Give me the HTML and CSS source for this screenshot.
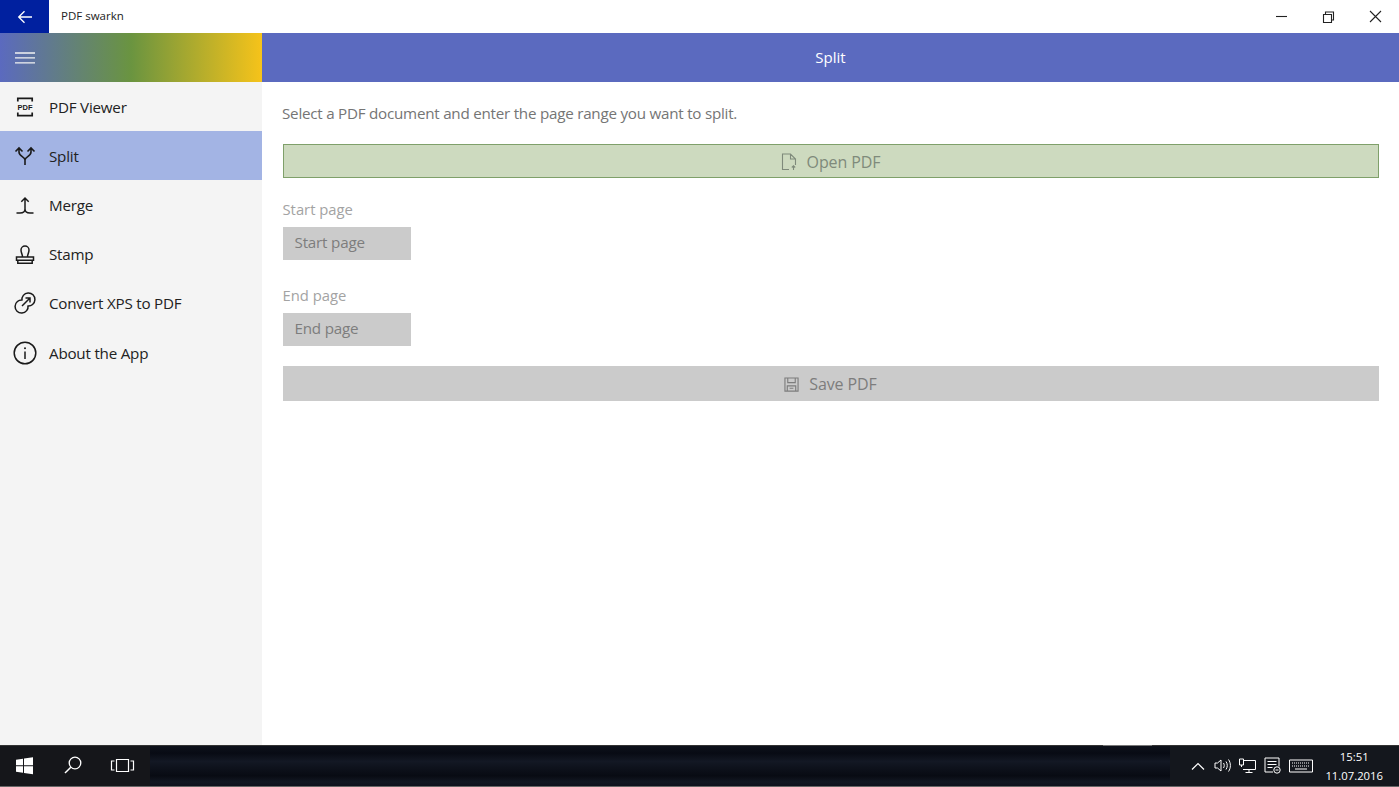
FILE: index.html
```html
<!DOCTYPE html>
<html lang="en">
<head>
<meta charset="utf-8">
<title>PDF swarkn</title>
<link rel="stylesheet" href="styles.css">
</head>
<body>
<div class="window">
  <div class="titlebar">
    <div class="back"><svg width="16" height="14" viewBox="0 0 16 14"><path d="M15 7H2M7.500 1.200 1.700 7l5.800 5.800" fill="none" stroke="#fff" stroke-width="1.300"/></svg></div>
    <div class="apptitle">PDF swarkn</div>
    <div class="winctl">
      <svg class="ctl" width="47" height="33" viewBox="0 0 47 33"><path d="M18 16.500h11" stroke="#222" stroke-width="1.100"/></svg>
      <svg class="ctl" width="47" height="33" viewBox="0 0 47 33"><path d="M18.500 14.500h8v8h-8zM20.500 14.500v-2.500h8v8h-2" fill="none" stroke="#222" stroke-width="1.100"/></svg>
      <svg class="ctl" width="47" height="33" viewBox="0 0 47 33"><path d="M18 11l11 11M29 11 18 22" stroke="#222" stroke-width="1.100"/></svg>
    </div>
  </div>
  <div class="appbar">
    <div class="brand"><svg width="20" height="12" viewBox="0 0 20 12"><path d="M0 1h20M0 5.800h20M0 10.800h20" stroke="#f2f2f2" stroke-width="1.300"/></svg></div>
    <div class="pagetitle">Split</div>
  </div>
  <div class="body">
    <nav class="sidebar">
      <a class="item"><svg class="icon" width="24" height="24" viewBox="0 0 24 24"><path d="M4.800 6.500V3.300h14.400v3.200M4.800 17.500v3.200h14.400v-3.200" fill="none" stroke="#1a1a1a" stroke-width="1.700"/><text x="12" y="14.700" class="pdfmark">PDF</text></svg><span>PDF Viewer</span></a>
      <a class="item active"><svg class="icon" width="24" height="24" viewBox="0 0 24 24"><path d="M12 21v-5c0-3.500-6-3.500-6-8V4M12 16c0-3.500 6-3.500 6-8V4M2.500 7.500 6 4l3.500 3.500M14.500 7.500 18 4l3.500 3.500" fill="none" stroke="#1a1a1a" stroke-width="1.600"/></svg><span>Split</span></a>
      <a class="item"><svg class="icon" width="24" height="24" viewBox="0 0 24 24"><path d="M12 5v11M8.300 8.700 12 5l3.700 3.700M3.500 20H7c3 0 5-1 5-4 0 3 2 4 5 4h3.500" fill="none" stroke="#1a1a1a" stroke-width="1.500"/></svg><span>Merge</span></a>
      <a class="item"><svg class="icon" width="24" height="24" viewBox="0 0 24 24"><path d="M9.500 15c0-3-1.500-3.800-1.500-7a4 4 0 0 1 8 0c0 3.200-1.500 4-1.500 7zM3.500 15h17v3.200h-17zM4.800 18.200v3h14.400v-3" fill="none" stroke="#1a1a1a" stroke-width="1.500"/></svg><span>Stamp</span></a>
      <a class="item"><svg class="icon" width="24" height="24" viewBox="0 0 24 24"><path d="M9.500 9.100A6.500 6.500 0 1 0 15 14.500M9 9.500A6.500 6.500 0 1 1 14.500 14.900M9 15 16.500 7.500M12.500 7h4.500v4.500" fill="none" stroke="#1a1a1a" stroke-width="1.500"/></svg><span>Convert XPS to PDF</span></a>
      <a class="item"><svg class="icon" width="24" height="24" viewBox="0 0 24 24"><circle cx="12" cy="12" r="10.800" fill="none" stroke="#1a1a1a" stroke-width="1.500"/><path d="M12 10.500V18" stroke="#1a1a1a" stroke-width="1.500"/><circle cx="12" cy="7.300" r="1" fill="#1a1a1a"/></svg><span>About the App</span></a>
    </nav>
    <main class="content">
      <p class="intro">Select a PDF document and enter the page range you want to split.</p>
      <div class="btn btn-open"><svg width="16" height="18" viewBox="0 0 16 18"><path d="M8 16.500H1.500V1h8l5 5v6M9.500 1v5h5M12.500 17v-4M10.800 14.500l1.700-1.700 1.700 1.700" fill="none" stroke="#7f8a7b" stroke-width="1.100"/></svg><span>Open PDF</span></div>
      <label class="lbl">Start page</label>
      <div class="field">Start page</div>
      <label class="lbl">End page</label>
      <div class="field">End page</div>
      <div class="btn btn-save"><svg width="15" height="15" viewBox="0 0 16 16"><path d="M1 1h14v14H1zM4 1v5h8V1M3.500 15V9.500h9V15M6 12h4" fill="none" stroke="#7d7d7d" stroke-width="1.200"/></svg><span>Save PDF</span></div>
    </main>
  </div>
  <footer class="taskbar">
    <div class="tb-left">
      <svg class="tb" width="49" height="41" viewBox="0 0 49 41"><path d="M16 14.800l7-1v6.500h-7zM24 13.600l9-1.400v8.100h-9zM16 21.300h7v6.400l-7-1zM24 21.300h9v8l-9-1.300z" fill="#fff"/></svg>
      <svg class="tb" width="49" height="41" viewBox="0 0 49 41"><circle cx="26" cy="18" r="5.800" fill="none" stroke="#fff" stroke-width="1.300"/><path d="M21.800 22.200 16 28" stroke="#fff" stroke-width="1.500"/></svg>
      <svg class="tb" width="49" height="41" viewBox="0 0 49 41"><path d="M18.500 14.500h12v12h-12zM16.500 16h-3v9h3M32.500 16h3v9h-3" fill="none" stroke="#fff" stroke-width="1.200"/></svg>
    </div>
    <div class="tb-right">
      <svg class="tray" width="16" height="10" viewBox="0 0 16 10"><path d="M2 8.500 8 2.500l6 6" fill="none" stroke="#fff" stroke-width="1.200"/></svg>
      <svg class="tray" width="17" height="15" viewBox="0 0 17 15"><path d="M1 5h2.500L7 2v11L3.500 10H1zM9.500 5c1 1.500 1 3.500 0 5M12 3.500c1.700 2.500 1.700 5.500 0 8M14.500 1.500c2.500 3.500 2.500 8.500 0 12" fill="none" stroke="#fff" stroke-width="1"/></svg>
      <svg class="tray" width="17" height="16" viewBox="0 0 17 16"><path d="M4 2.500h12.500v9H4M10 11.500v3M6.500 14.500h7M.5 1h4v6h-4zM2.500 7v2" fill="none" stroke="#fff" stroke-width="1"/></svg>
      <svg class="tray" width="17" height="17" viewBox="0 0 17 17"><path d="M9 15H1V1h14v8.500M3.500 4.500h9M3.500 7.500h9M3.500 10.500h5" fill="none" stroke="#fff" stroke-width="1"/><circle cx="13" cy="13" r="3.200" fill="none" stroke="#fff"/><path d="M11.500 13h3" stroke="#fff"/></svg>
      <svg class="tray" width="24" height="14" viewBox="0 0 24 14"><path d="M.5 1h23v12H.5z" fill="none" stroke="#fff"/><path d="M3 4h18M3 7h18" stroke="#fff" stroke-dasharray="1 1"/><path d="M6 10h12" stroke="#fff"/></svg>
      <div class="clock"><div>15:51</div><div>11.07.2016</div></div>
    </div>
  </footer>
</div>
</body>
</html>
```
FILE: styles.css
```css
* { box-sizing: border-box; }
html, body { margin: 0; height: 100%; }
body { font-family: "Open Sans", "Noto Sans", "Liberation Sans", sans-serif; background: #fff; overflow: hidden; }
.window { width: 1399px; height: 787px; display: flex; flex-direction: column; }
.titlebar { height: 33px; display: flex; align-items: center; background: #fff; flex: none; }
.back { width: 49px; height: 33px; background: #00209f; display: flex; align-items: center; justify-content: center; }
.apptitle { margin-left: 12px; padding-bottom: 2px; font-size: 11.500px; color: #222; flex: 1; }
.winctl { display: flex; }
.ctl { display: block; }
.appbar { height: 49px; display: flex; flex: none; background: #5b6abf; }
.brand { width: 262px; padding-left: 15px; display: flex; align-items: center; background: linear-gradient(90deg, #5b6abf 0%, #6a9440 50%, #f6c31a 100%); }
.pagetitle { flex: 1; text-align: center; color: #fff; font-size: 15px; line-height: 48px; }
.body { flex: 1; display: flex; min-height: 0; }
.sidebar { width: 262px; background: #f4f4f4; flex: none; }
.item { height: 49.200px; display: flex; align-items: center; padding-left: 13px; gap: 12px; font-size: 15.200px; letter-spacing: -0.220px; color: #222; }
.item.active { background: #a3b4e4; }
.icon { display: block; flex: none; }
.pdfmark { font-family: "Liberation Sans", sans-serif; font-weight: 700; font-size: 7.500px; text-anchor: middle; fill: #1a1a1a; letter-spacing: 0; }
.content { flex: 1; padding: 20px 20.500px 0; }
.intro { margin: 0 0 19px; font-size: 15.200px; letter-spacing: -0.240px; line-height: 23px; color: #757575; margin-left: -0.500px; }
.btn { display: flex; align-items: center; justify-content: center; gap: 10px; font-size: 16px; letter-spacing: -0.100px; padding-top: 1px; }
.btn-open { height: 34px; background: #cddabf; border: 1.500px solid #7fa06a; color: #7f8a7b; }
.btn-save { height: 35px; background: #cbcbcb; color: #7d7d7d; margin-top: 20px; }
.lbl { display: block; margin-top: 20px; height: 22px; line-height: 22px; font-size: 14.800px; color: #a3a3a3; }
.field { width: 128px; height: 33px; margin-top: 7px; padding-left: 12px; background: #cbcbcb; color: #7d7d7d; font-size: 15.200px; letter-spacing: -0.200px; line-height: 31px; }
.field + .lbl { margin-top: 24px; }
.taskbar {
  height: 42px; flex: none;
  border-bottom: 1px solid #666;
  display: flex; justify-content: space-between; align-items: center;
  background:
    linear-gradient(#777, #777) 1103px 0 / 49px 1px no-repeat,
    linear-gradient(#333, #333) 0 0 / 100% 1px no-repeat,
    linear-gradient(#15161a, #15161a) 0 0 / 150px 100% no-repeat,
    linear-gradient(#14171d, #14171d) 1170px 0 / 229px 100% no-repeat,
    linear-gradient(#0e121c, #080b14 20%, #131824 40%, #0e121c 55%, #080b13 75%, #121722 90%, #0e121c);
}
.tb-left { display: flex; }
.tb { display: block; }
.tb-right { display: flex; align-items: center; gap: 8px; padding-right: 16px; }
.tray { display: block; }
.clock { margin-left: 4px; text-align: center; color: #fff; font-size: 11.300px; line-height: 19px; }
```
